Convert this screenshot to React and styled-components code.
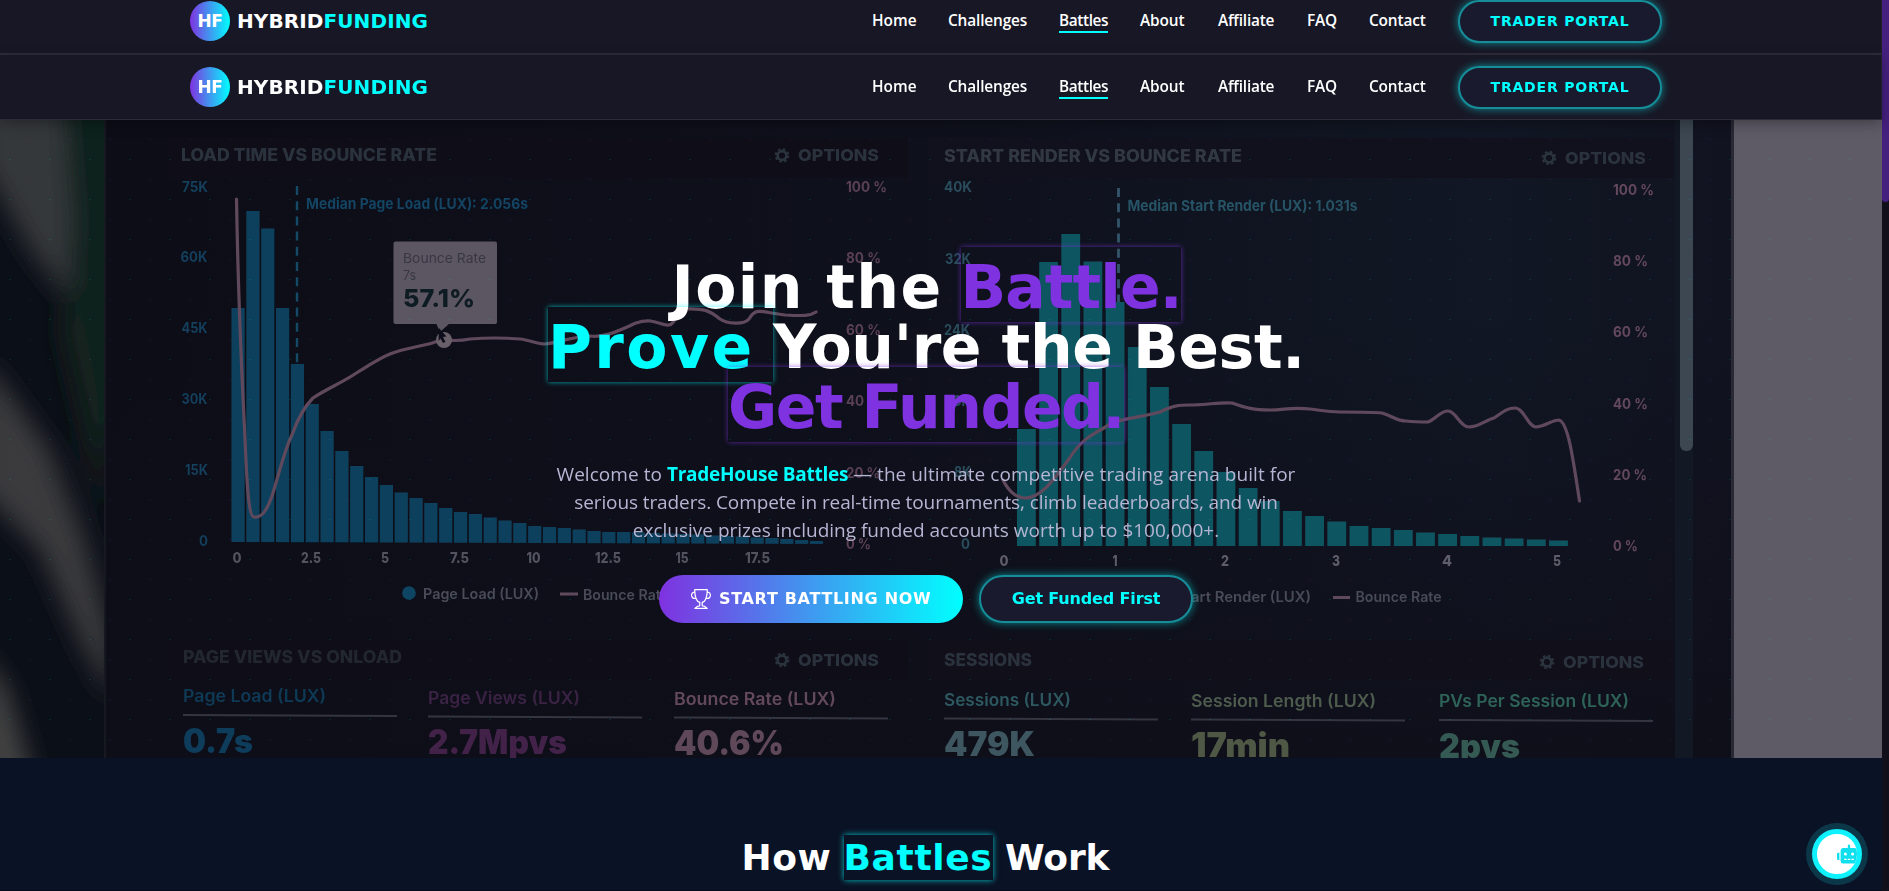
import React from "react";
import styled, { createGlobalStyle, css } from "styled-components";
import { BsTrophy } from "react-icons/bs";
import { FaRobot } from "react-icons/fa";

const CYAN = "#00ffff";
const PURPLE = "#7f32e0";
const DISPLAY = '"DejaVu Sans", "Liberation Sans", sans-serif';
const BODY = '"Open Sans", "Noto Sans", sans-serif';

const Global = createGlobalStyle`
  * { box-sizing: border-box; }
  body { margin: 0; background: #0a1225; overflow: hidden; }
`;

const Page = styled.div`
  display: flex;
  height: 891px;
  overflow: hidden;
  font-family: ${BODY};
  color: #fff;
`;

const Content = styled.div`
  flex: 1;
  min-width: 0;
  display: flex;
  flex-direction: column;
`;

const ScrollTrack = styled.div`
  width: 7px;
  background: #100f1a;
`;

const ScrollThumb = styled.div`
  height: 202px;
  background: #45207f;
  border-radius: 0 0 4px 4px;
`;

const Header = styled.header`
  position: relative;
  z-index: 2;
  flex: none;
  background: #181725;
  border-right: 1px solid #201f2d;
  padding-left: 190px;
  ${(p) =>
    p.$clipped
      ? css`
          height: 55px;
          padding-bottom: 11px;
          border-bottom: 2px solid #2e2c3b;
          overflow: hidden;
        `
      : css`
          height: 65px;
          padding: 11px 0 11px 190px;
          border-bottom: 1px solid #2e2c3b;
          box-shadow: 0 4px 12px rgba(0, 0, 0, 0.3);
        `}
`;

const HeaderRow = styled.div`
  width: 1472px;
  height: 42px;
  display: flex;
  align-items: center;
`;

const Brand = styled.div`
  display: flex;
  align-items: center;
  gap: 7px;
  font: 700 20px/40px ${DISPLAY};
  letter-spacing: 0.1px;
`;

const BrandMark = styled.span`
  width: 40px;
  height: 40px;
  border-radius: 50%;
  background: linear-gradient(90deg, ${PURPLE}, ${CYAN});
  font-size: 17px;
  letter-spacing: -0.3px;
  text-align: center;
`;

const Accent = styled.span`
  color: ${CYAN};
`;

const Nav = styled.nav`
  margin-left: auto;
  display: flex;
  align-items: center;
  gap: 32px;
`;

const NavLink = styled.a`
  width: ${(p) => p.$w}px;
  height: 24px;
  padding-top: 1px;
  font: 600 15.4px/22px ${BODY};
  letter-spacing: ${(p) => p.$track}px;
  white-space: nowrap;
  border-bottom: 2px solid ${(p) => (p.$active ? CYAN : "transparent")};
`;

const outline = css`
  border: 2px solid #168d98;
  border-radius: 24px;
  background: #1a1a2e;
  color: ${CYAN};
  box-shadow: 0 0 8px rgba(0, 255, 255, 0.5);
`;

const PortalButton = styled.button`
  ${outline}
  width: 204px;
  height: 43px;
  padding: 0;
  font: 700 14px/38px ${DISPLAY};
  letter-spacing: 0.8px;
`;

const Hero = styled.section`
  position: relative;
  flex: none;
  height: 638px;
  overflow: hidden;
  background: #0d0e18;
`;

const Backdrop = styled.svg`
  position: absolute;
  inset: 0;
  width: 1882px;
  height: 638px;
  font-family: Inter, sans-serif;
`;

const HeroBody = styled.div`
  position: relative;
  width: 1852px;
  padding-top: 134.5px;
  display: flex;
  flex-direction: column;
  align-items: center;
`;

const Title = styled.h1`
  margin: 0;
  font: 700 60px/70px ${DISPLAY};
`;

const TitleLine = styled.span`
  height: 60px;
  display: flex;
  align-items: center;
  justify-content: center;
`;

const Word = styled.span`
  width: ${(p) => p.$w}px;
  height: 75px;
  padding-top: 5px;
  white-space: pre;
  letter-spacing: ${(p) => p.$track}px;
  color: ${(p) => p.$color || "#fff"};
  box-shadow: ${(p) => (p.$glow ? `0 0 5px ${p.$glow}` : "none")};
`;

const Lead = styled.p`
  margin: 25px 0 0;
  font: 400 19px/28px ${BODY};
  color: #b6b5d3;
  text-align: center;
  white-space: nowrap;
`;

const LeadLine = styled.span`
  display: block;
  letter-spacing: ${(p) => p.$track}px;
`;

const Strong = styled.strong`
  color: ${CYAN};
  font-weight: 700;
  letter-spacing: -0.27px;
`;

const Actions = styled.div`
  display: flex;
  gap: 16px;
  margin-top: 31.5px;
`;

const PrimaryButton = styled.button`
  width: 304px;
  height: 48px;
  display: flex;
  align-items: center;
  gap: 8px;
  padding: 0 0 0 32px;
  border: 0;
  border-radius: 24px;
  background: linear-gradient(90deg, ${PURPLE}, ${CYAN});
  color: #fff;
  font: 700 16px/48px ${DISPLAY};
  letter-spacing: 0.68px;
  white-space: nowrap;
`;

const SecondaryButton = styled.button`
  ${outline}
  width: 214px;
  height: 48px;
  padding: 0;
  font: 700 16px/44px ${DISPLAY};
  letter-spacing: -0.15px;
`;

const HowSection = styled.section`
  flex: 1;
  width: 1882px;
  padding: 77px 30px 0 0;
  background: #0a1225;
  border-bottom: 1px solid #060b17;
`;

const SectionTitle = styled.h2`
  margin: 0;
  display: flex;
  justify-content: center;
  font: 700 36px/43px ${DISPLAY};
  white-space: pre;
`;

const SectionWord = styled.span`
  width: ${(p) => p.$w}px;
  height: 45px;
  padding-top: 1px;
  letter-spacing: ${(p) => p.$track}px;
  ${(p) => p.$lit && `color: ${CYAN}; box-shadow: 0 0 6px rgba(0,255,255,.75);`}
`;

const ChatBubble = styled.button`
  position: absolute;
  left: 1812px;
  top: 829px;
  width: 50px;
  height: 50px;
  padding: 0 0 0 20px;
  display: flex;
  align-items: center;
  overflow: hidden;
  border: 5px solid #0ff2fd;
  border-radius: 50%;
  background: #fff;
  color: #10dfee;
  box-shadow: 0 0 0 6px rgba(15, 242, 253, 0.17);
  svg { flex: none; }
`;

const links = [
  ["Home", 44, 0],
  ["Challenges", 79, -0.15],
  ["Battles", 49, -0.4],
  ["About", 46, -0.1],
  ["Affiliate", 57, -0.2],
  ["FAQ", 30, -0.2],
  ["Contact", 57, -0.15],
];

function SiteHeader({ clipped }) {
  return (
    <Header $clipped={clipped}>
      <HeaderRow>
        <Brand>
          <BrandMark>HF</BrandMark>
          <span>
            HYBRID<Accent>FUNDING</Accent>
          </span>
        </Brand>
        <Nav>
          {links.map(([label, w, track]) => (
            <NavLink key={label} $w={w} $track={track} $active={label === "Battles"}>
              {label}
            </NavLink>
          ))}
          <PortalButton>TRADER PORTAL</PortalButton>
        </Nav>
      </HeaderRow>
    </Header>
  );
}

/* Chart label: y is the middle of the capitals, w the drawn width. */
function Label({ x, y, w, size = 15, weight = 700, fill, children }) {
  return (
    <text x={x} y={y + size * 0.36} fontSize={size} fontWeight={weight} fill={fill} textLength={w} lengthAdjust="spacingAndGlyphs">
      {children}
    </text>
  );
}

function Gear({ x, y }) {
  return (
    <g transform={`translate(${x} ${y})`} stroke="#2b343e" fill="none">
      <circle r="4.4" strokeWidth="2.6" />
      <circle r="6.3" strokeWidth="2" strokeDasharray="2.6 2.35" />
    </g>
  );
}

const loadTops = [
  308, 211, 228.5, 308, 364, 404, 431, 451, 466, 477, 485, 492.5, 498, 503, 508, 512, 514, 517.5, 520.5, 523,
  526, 527, 528, 529.5, 531, 532, 532, 532.5, 533, 533.5, 534, 534.5, 535.5, 536, 536.5, 537.5, 538, 539, 540, 541,
];
const renderTops = [
  429, 262, 234, 261.5, 302, 347, 387, 424, 451, 472, 488, 501, 511, 516, 521.5, 526, 528, 530, 532.5, 534, 536,
  537.5, 538.5, 539.5, 540.5,
];

const loadTicks = [["75K", 182, 187, 26], ["60K", 180.5, 257, 27], ["45K", 181.5, 328, 26], ["30K", 181.5, 399, 26], ["15K", 185, 470, 23], ["0", 199, 541, 9]];
const renderTicks = [["40K", 944, 187, 28], ["32K", 945, 258.5, 26], ["24K", 944, 330, 26], ["16K", 947, 401, 24], ["8K", 954, 472, 17], ["0", 961, 544, 9]];
const percents = [["100 %", 0, 41], ["80 %", 71, 35], ["60 %", 142.5, 35], ["40 %", 214, 35], ["20 %", 285.5, 34], ["0 %", 356.5, 25]];
const loadAxis = [["0", 232.5, 9], ["2.5", 301, 20], ["5", 381, 8], ["7.5", 450, 19], ["10", 526.5, 14], ["12.5", 595, 26], ["15", 675.5, 13], ["17.5", 745, 25]];
const renderAxis = [["0", 999.5, 9], ["1", 1112.5, 5], ["2", 1221, 8], ["3", 1332, 8], ["4", 1442, 10], ["5", 1553, 8]];

const metrics = [
  ["Page Load (LUX)", "0.7s", 183, 143, 70, 696, "#113a56", "#103c5a"],
  ["Page Views (LUX)", "2.7Mpvs", 428, 152, 139, 697.5, "#3a2444", "#432349"],
  ["Bounce Rate (LUX)", "40.6%", 674, 162, 110, 698.5, "#64495c", "#5f4858"],
  ["Sessions (LUX)", "479K", 944, 127, 91, 699.5, "#2e5860", "#3d5760"],
  ["Session Length (LUX)", "17min", 1191, 185, 99, 700.5, "#4d5b4d", "#505845"],
  ["PVs Per Session (LUX)", "2pvs", 1439, 190, 81, 701, "#2f6358", "#355a53"],
];

function AnalyticsScreen() {
  return (
    <Backdrop viewBox="0 120 1882 638" aria-hidden="true">
      <defs>
        <linearGradient id="screen" x1="0" y1="0" x2="1" y2="0">
          <stop offset="0" stopColor="#0d0d17" />
          <stop offset=".45" stopColor="#0e101b" />
          <stop offset=".85" stopColor="#111724" />
          <stop offset="1" stopColor="#111320" />
        </linearGradient>
        <linearGradient id="shade" x1="0" y1="0" x2="0" y2="1">
          <stop offset=".3" stopColor="#0e0f1a" stopOpacity="0" />
          <stop offset="1" stopColor="#0e0e18" stopOpacity=".85" />
        </linearGradient>
        <filter id="defocus" x="-50%" y="-20%" width="200%" height="140%">
          <feGaussianBlur stdDeviation="12" />
        </filter>
        <filter id="soft">
          <feGaussianBlur stdDeviation="0.5" />
        </filter>
        <clipPath id="room">
          <rect x="0" y="120" width="104" height="638" />
        </clipPath>
        <pattern id="dots" x="0" y="0" width="40" height="40" patternUnits="userSpaceOnUse">
          <rect x="9" y="39" width="2" height="1" fill="#00ffff" opacity=".1" />
          <rect x="29" y="19" width="2" height="1" fill="#8a2be2" opacity=".13" />
        </pattern>
      </defs>

      <rect x="0" y="120" width="106" height="638" fill="#0b0f17" />
      <g clipPath="url(#room)">
        <g filter="url(#defocus)">
          <path d="M62 90H120V420L100 470L75 300Z" fill="#10221a" />
          <path d="M-20 90H62L72 220L68 300L30 250L-20 160Z" fill="#36373a" />
          <path d="M72 260L104 420V520L60 330Z" fill="#17221f" />
          <path d="M-20 360L0 380L50 450L85 540L112 640V700L80 640L40 550L-20 490Z" fill="#3a3b3d" />
          <path d="M-20 650L8 690L36 790H-20Z" fill="#434243" />
        </g>
      </g>
      <rect x="104" y="120" width="1630" height="638" fill="url(#screen)" />
      <rect x="104" y="120" width="1630" height="638" fill="url(#shade)" />
      <rect x="104" y="120" width="2" height="638" fill="#16191f" />
      <rect x="168" y="138" width="740" height="40" fill="#0f0e18" />
      <rect x="928" y="138" width="746" height="40" fill="#11111d" />
      <rect x="168" y="640" width="740" height="40" fill="#0f0d17" />
      <rect x="928" y="640" width="746" height="40" fill="#110f1a" />
      <rect x="1675" y="120" width="18" height="638" fill="#131924" />
      <rect x="1680" y="110" width="13" height="341" rx="6" fill="#3c4751" />
      <rect x="1731" y="120" width="4" height="638" fill="#292936" />
      <rect x="1734" y="120" width="148" height="638" fill="#5e5b67" />

      <g filter="url(#soft)">
        {[["LOAD TIME VS BOUNCE RATE", 181, 155, 256, "#2c333c"], ["START RENDER VS BOUNCE RATE", 944, 156, 298, "#323943"], ["PAGE VIEWS VS ONLOAD", 183, 657, 219, "#23282f"], ["SESSIONS", 944, 660, 88, "#2c323c"]].map(([t, x, y, w, fill]) => (
          <Label key={t} x={x} y={y} w={w} size={17} weight={800} fill={fill}>{t}</Label>
        ))}
        {[[782, 155.5], [1549, 158], [782, 660], [1547, 662]].map(([x, y]) => (
          <g key={`${x}-${y}`}>
            <Gear x={x} y={y} />
            <Label x={x + 16} y={y} w={81} size={16.5} weight={800} fill="#2b333d">OPTIONS</Label>
          </g>
        ))}

        {loadTops.map((top, i) => (
          <rect key={i} x={231.5 + i * 14.83} y={top} width="13.2" height={542 + i * 0.05 - top} fill="#0e405d" />
        ))}
        {renderTops.map((top, i) => (
          <rect key={i} x={1017 + i * 22.17} y={top} width="18.8" height={546 - top} fill="#115461" />
        ))}
        <path d="M297 186V363" stroke="#124a66" strokeWidth="2.4" strokeDasharray="9 6.2" />
        <path d="M1118.5 188V302" stroke="#36566a" strokeWidth="2.8" strokeDasharray="9 6.2" />
        <Label x={306} y={204} w={222} fill="#124463">Median Page Load (LUX): 2.056s</Label>
        <Label x={1127.5} y={206} w={230} fill="#265365">Median Start Render (LUX): 1.031s</Label>

        {loadTicks.map(([t, x, y, w]) => <Label key={t} x={x} y={y} w={w} fill="#133f5c">{t}</Label>)}
        {renderTicks.map(([t, x, y, w]) => <Label key={t} x={x} y={y} w={w} fill="#2a4d5d">{t}</Label>)}
        {percents.map(([t, dy, w]) => <Label key={t} x={846} y={187 + dy} w={w} size={14.5} fill="#5a4054">{t}</Label>)}
        {percents.map(([t, dy, w]) => <Label key={t} x={1613} y={189.5 + dy} w={w} size={14.5} fill="#64485d">{t}</Label>)}
        {loadAxis.map(([t, x, w]) => <Label key={t} x={x} y={558} w={w} weight={800} fill="#53535f">{t}</Label>)}
        {renderAxis.map(([t, x, w]) => <Label key={t} x={x} y={561} w={w} weight={800} fill="#5e5d6a">{t}</Label>)}

        <g fill="none" stroke="#604a5c" strokeWidth="3.2" strokeLinecap="round" strokeLinejoin="round">
          <path d="M236.5 199C238 290 242 380 245 438C247 490 249 517 254 517C262 518 267 510 272 496C279 474 285 448 292 435C298 418 304 407 313 398C328 388 340 384 358 372C374 362 380 358 390 354C408 347 425 346 435 342C440 340 442 339 447 340C455 341 460 341 470 339Q495 337 520 339C530 340 537 344 545 344C557 343 570 337 590 336C605 338 620 330 636 323C654 317 660 326 669 325C677 324 674 309 684 309C705 308 710 311 720 319C727 324 744 325 749 319C756 307 760 312 785 315C804 316 810 316 816 312" />
          <path d="M1003 480C1007 488 1014 497 1024 498C1040 499 1052 482 1069 459C1080 441 1091 435 1104 428C1115 418 1140 418 1160 412C1174 405 1180 405 1190 405C1207 405 1220 402 1232 403C1246 408 1254 410 1270 410C1285 410 1290 407 1310 409C1325 411 1328 412 1340 412C1360 412 1374 412 1382 413C1393 416 1396 421 1406 421C1415 422 1420 422 1428 422C1436 419 1440 411 1448 411C1456 411 1460 427 1469 427C1479 427 1486 420 1494 418C1503 412 1507 408 1515 408C1524 408 1528 427 1536 427C1544 427 1552 420 1559 420C1568 422 1573 458 1579.5 501" />
        </g>

        <rect x="393.5" y="241.5" width="103.5" height="82.5" rx="2" fill="#5c5663" />
        <circle cx="444" cy="340" r="8" fill="#6a606b" />
        <path d="M436 323H450L440 332Z" fill="#5c5663" />
        <path d="M439 328L446.5 336.5L443 337L445.5 342L443 343L440.5 338.5L438.500 341Z" fill="#11111c" />
        <Label x={403} y={258.5} w={83} size={13.5} weight={400} fill="#383743">Bounce Rate</Label>
        <Label x={403} y={275.5} w={13} size={13.5} weight={400} fill="#383743">7s</Label>
        <Label x={403} y={298} w={72} size={25} weight={800} fill="#111a24">57.1%</Label>

        <circle cx="409" cy="593" r="6.8" fill="#104564" />
        <path d="M560 594H578M1333 597.5H1350" stroke="#604a5c" strokeWidth="3" />
        <Label x={423} y={594} w={116} size={14.5} weight={600} fill="#4a4c59">Page Load (LUX)</Label>
        <Label x={583} y={594.5} w={86} size={14.5} weight={600} fill="#4a4c59">Bounce Rate</Label>
        <Label x={1176} y={597} w={135} size={14.5} weight={600} fill="#4a4c59">Start Render (LUX)</Label>
        <Label x={1355.5} y={597} w={86} size={14.5} weight={600} fill="#4a4c59">Bounce Rate</Label>

        {metrics.map(([label, value, x, lw, vw, y, c1, c2]) => (
          <g key={label}>
            <Label x={x} y={y} w={lw} size={17} weight={600} fill={c1}>{label}</Label>
            <path d={`M${x} ${y + 19}L${x + 214} ${y + 20}`} stroke="#343642" strokeWidth="2" />
            <Label x={x} y={y + 44.5} w={vw} size={33.5} weight={900} fill={c2}>{value}</Label>
          </g>
        ))}
      </g>
      <rect x="0" y="120" width="1882" height="638" fill="url(#dots)" />
    </Backdrop>
  );
}

export default function App() {
  return (
    <>
      <Global />
      <Page>
        <Content>
          <SiteHeader clipped />
          <SiteHeader />
          <Hero>
            <AnalyticsScreen />
            <HeroBody>
              <Title>
                <TitleLine>
                  <Word $w={289} $track={1.4}>{"Join the "}</Word>
                  <Word $w={220} $track={-0.95} $color={PURPLE} $glow="rgba(127,50,224,.7)">Battle.</Word>
                </TitleLine>
                <TitleLine>
                  <Word $w={225} $track={2.4} $color={CYAN} $glow="rgba(0,255,255,.65)">{"Prove "}</Word>
                  <Word $w={531} $track={-0.4}>You're the Best.</Word>
                </TitleLine>
                <TitleLine>
                  <Word $w={396} $track={-1.5} $color={PURPLE} $glow="rgba(127,50,224,.7)">Get Funded.</Word>
                </TitleLine>
              </Title>
              <Lead>
                <LeadLine $track={0.05}>
                  Welcome to <Strong>TradeHouse Battles</Strong> — the ultimate competitive trading arena built for
                </LeadLine>
                <LeadLine $track={-0.1}>
                  serious traders. Compete in real-time tournaments, climb leaderboards, and win
                </LeadLine>
                <LeadLine $track={0}>exclusive prizes including funded accounts worth up to $100,000+.</LeadLine>
              </Lead>
              <Actions>
                <PrimaryButton>
                  <BsTrophy size={20} />
                  START BATTLING NOW
                </PrimaryButton>
                <SecondaryButton>Get Funded First</SecondaryButton>
              </Actions>
            </HeroBody>
          </Hero>
          <HowSection>
            <SectionTitle>
              <SectionWord $w={102} $track={0.6}>{"How "}</SectionWord>
              <SectionWord $w={149} $track={0.65} $lit>Battles</SectionWord>
              <SectionWord $w={118} $track={-0.1}>{" Work"}</SectionWord>
            </SectionTitle>
          </HowSection>
        </Content>
        <ScrollTrack>
          <ScrollThumb />
        </ScrollTrack>
        <ChatBubble aria-label="Chat">
          <FaRobot size={24} />
        </ChatBubble>
      </Page>
    </>
  );
}
